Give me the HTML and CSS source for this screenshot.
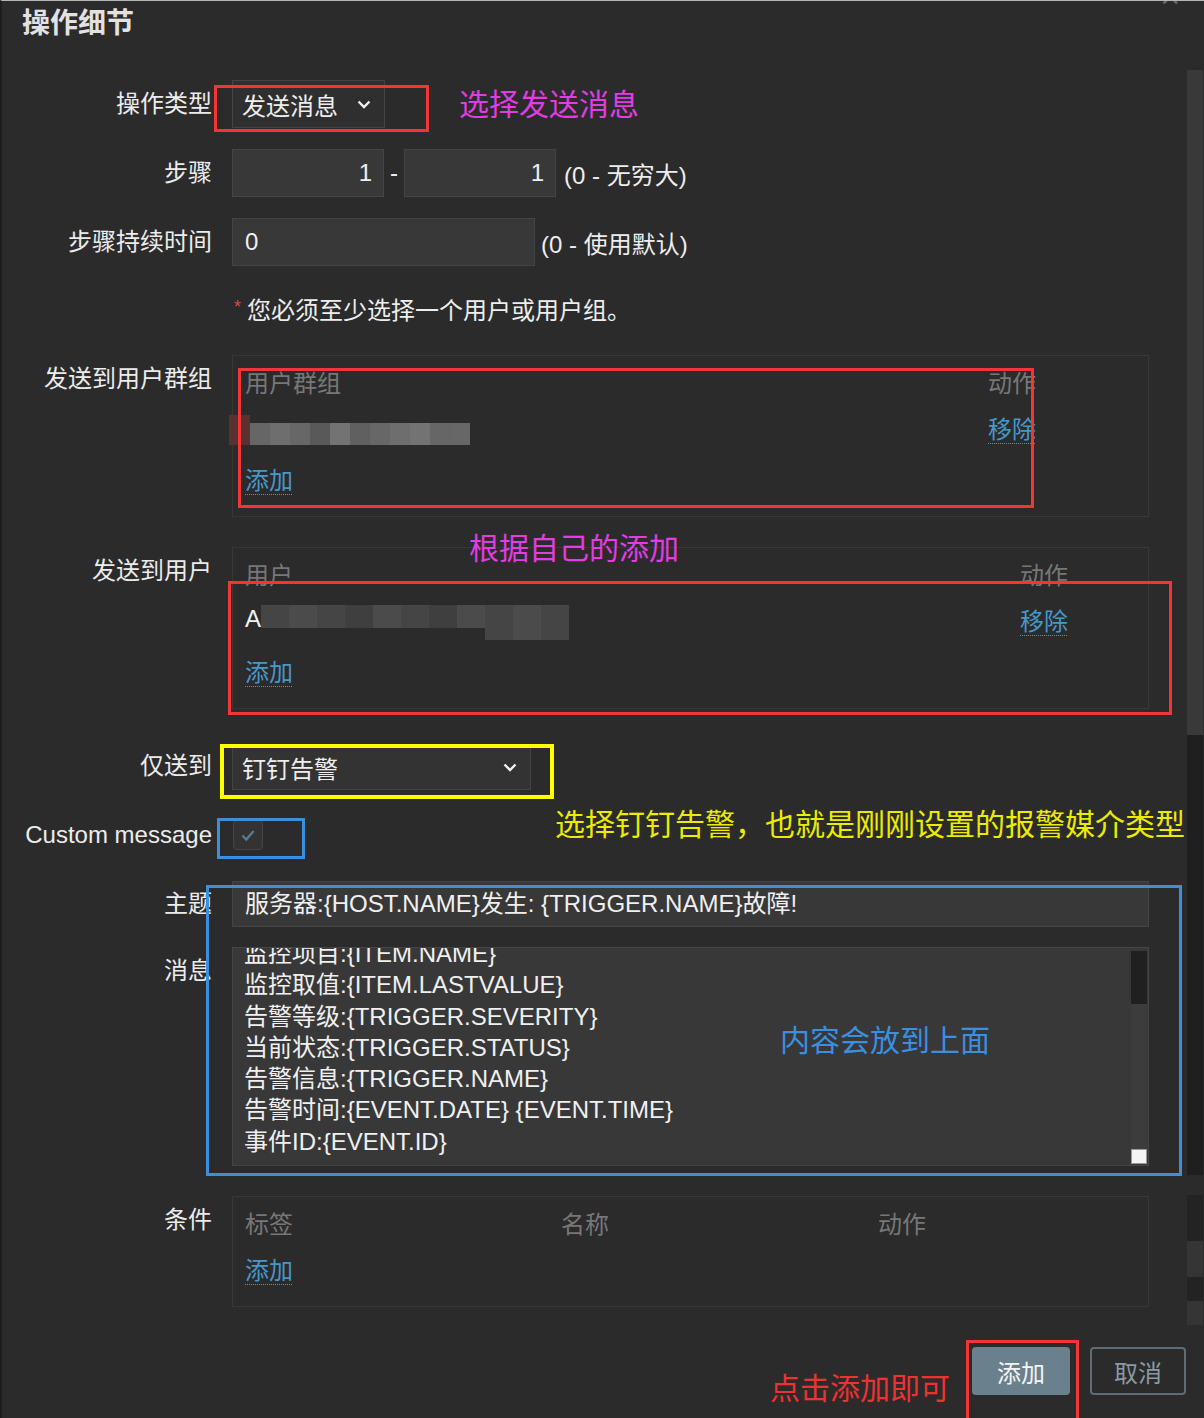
FILE: index.html
```html
<!DOCTYPE html>
<html lang="zh-CN">
<head>
  <meta charset="UTF-8">
  <title>操作细节</title>
  <link rel="stylesheet" href="styles.css">
</head>
<body>
<div class="page">
  <div class="dialog">
    <span class="close">×</span>
    <h2 class="title">操作细节</h2>

    <div class="row first">
      <label class="label">操作类型</label>
      <div class="field">
        <div class="select select-type">
          <span>发送消息</span>
          <svg class="chev" viewBox="0 0 14 9"><path d="M1.5 1.5 L7 7 L12.5 1.5"/></svg>
        </div>
      </div>
    </div>

    <div class="row">
      <label class="label">步骤</label>
      <div class="field inline">
        <div class="input num">1</div>
        <span class="dash">-</span>
        <div class="input num">1</div>
        <span class="hint">(0 - 无穷大)</span>
      </div>
    </div>

    <div class="row">
      <label class="label">步骤持续时间</label>
      <div class="field inline">
        <div class="input wide">0</div>
        <span class="hint hint-near">(0 - 使用默认)</span>
      </div>
    </div>

    <div class="row">
      <span class="label"></span>
      <div class="field note"><span class="req">*</span>您必须至少选择一个用户或用户组。</div>
    </div>

    <div class="row tight">
      <label class="label">发送到用户群组</label>
      <div class="table groups">
        <div class="trow thead"><span>用户群组</span><span>动作</span></div>
        <div class="trow data-row">
          <span class="pixels">
            <i class="px-red"></i><i class="g1"></i><i class="g2"></i><i class="g3"></i><i class="g4"></i><i class="g5"></i><i class="g6"></i><i class="g3"></i><i class="g2"></i><i class="g5"></i><i class="g1"></i><i class="g3"></i>
          </span>
          <a class="link">移除</a>
        </div>
        <div class="trow add-row"><a class="link">添加</a></div>
      </div>
    </div>

    <div class="row gap-lg">
      <label class="label">发送到用户</label>
      <div class="table users">
        <div class="trow thead"><span>用户</span><span>动作</span></div>
        <div class="trow data-row">
          <span class="user-blur">A<span class="pixels-dark"><i></i><i class="d2"></i><i></i><i class="d3"></i><i class="d2"></i><i></i><i class="d3"></i><i class="d2"></i><i class="low"></i><i class="low d2"></i><i class="low"></i></span></span>
          <a class="link">移除</a>
        </div>
        <div class="trow add-row"><a class="link">添加</a></div>
      </div>
    </div>

    <div class="row gap-xl">
      <label class="label label-mid">仅送到</label>
      <div class="field">
        <div class="select select-media">
          <span>钉钉告警</span>
          <svg class="chev" viewBox="0 0 14 9"><path d="M1.5 1.5 L7 7 L12.5 1.5"/></svg>
        </div>
      </div>
    </div>

    <div class="row gap-sm">
      <label class="label">Custom message</label>
      <div class="field inline">
        <span class="checkbox">
          <svg viewBox="0 0 16 16"><path d="M3 8.5 L6.5 12 L13 4.5"/></svg>
        </span>
      </div>
    </div>

    <div class="row">
      <label class="label">主题</label>
      <div class="input subject">服务器:{HOST.NAME}发生: {TRIGGER.NAME}故障!</div>
    </div>

    <div class="row gap-sm">
      <label class="label">消息</label>
      <div class="textarea">
        <div class="lines">
          <div>监控项目:{ITEM.NAME}</div>
          <div>监控取值:{ITEM.LASTVALUE}</div>
          <div>告警等级:{TRIGGER.SEVERITY}</div>
          <div>当前状态:{TRIGGER.STATUS}</div>
          <div>告警信息:{TRIGGER.NAME}</div>
          <div>告警时间:{EVENT.DATE} {EVENT.TIME}</div>
          <div>事件ID:{EVENT.ID}</div>
        </div>
        <div class="ta-scroll">
          <span class="ta-thumb"></span>
          <span class="ta-track"></span>
          <span class="ta-grip"></span>
        </div>
      </div>
    </div>

    <div class="row gap-lg">
      <label class="label">条件</label>
      <div class="table conditions">
        <div class="trow thead"><span>标签</span><span>名称</span><span>动作</span></div>
        <div class="trow"><a class="link">添加</a></div>
      </div>
    </div>

    <div class="footer">
      <button class="btn btn-primary">添加</button>
      <button class="btn btn-cancel">取消</button>
    </div>
  </div>

  <div class="vscroll">
    <span class="vs-thumb"></span>
    <span class="vs-dark"></span>
    <span class="vs-a"></span>
    <span class="vs-b"></span>
    <span class="vs-a vs-short"></span>
    <span class="vs-b vs-short"></span>
  </div>

  <!-- annotations drawn over the screenshot -->
  <div class="mark red m-type"></div>
  <div class="tip magenta t-type">选择发送消息</div>
  <div class="mark red m-groups"></div>
  <div class="tip magenta t-own">根据自己的添加</div>
  <div class="mark red m-users"></div>
  <div class="mark yellow m-media"></div>
  <div class="tip yellow-text t-media">选择钉钉告警，也就是刚刚设置的报警媒介类型</div>
  <div class="mark blue m-check"></div>
  <div class="mark blue m-msg"></div>
  <div class="tip blue-text t-msg">内容会放到上面</div>
  <div class="tip red-text t-add">点击添加即可</div>
  <div class="mark red m-add"></div>
</div>
</body>
</html>
```

FILE: styles.css
```css
body {
  margin: 0;
  background: #2b2b2b;
  font-family: "Liberation Sans", "Noto Sans CJK SC", sans-serif;
  font-size: 24px;
  color: #eeeeee;
}
.page {
  position: relative;
  width: 1204px;
  height: 1418px;
  overflow: hidden;
  display: flex;
  background: #2b2b2b;
  border-top: 1px solid #b5b5b5;
  border-left: 2px solid #1d1d1d;
  box-sizing: border-box;
}
.dialog {
  width: 1184px;
  position: relative;
}
.close {
  position: absolute;
  right: 6px;
  top: -24px;
  font-size: 34px;
  color: #6a6a6a;
}
.title {
  margin: 0;
  padding-left: 20px;
  font-size: 28px;
  line-height: 46px;
  font-weight: bold;
  color: #e2e2e2;
}

/* form rows */
.row {
  display: grid;
  grid-template-columns: 210px 917px;
  column-gap: 20px;
  align-items: start;
  margin-top: 21px;
}
.row.first { margin-top: 33px; }
.row.tight { margin-top: 20px; }
.row.gap-sm { margin-top: 19px; }
.row.gap-lg { margin-top: 30px; }
.row.gap-xl { margin-top: 35px; }
.label {
  text-align: right;
  line-height: 48px;
  height: 48px;
  color: #ececec;
  white-space: nowrap;
}
.label-mid { line-height: 44px; }
.field.inline {
  display: flex;
  align-items: center;
  height: 48px;
}
.input {
  box-sizing: border-box;
  height: 48px;
  line-height: 46px;
  border: 1px solid #454545;
  background: #383838;
  padding: 0 12px;
  color: #f0f0f0;
  white-space: nowrap;
}
.input.num {
  width: 152px;
  text-align: right;
  padding-right: 11px;
}
.input.wide { width: 303px; }
.input.subject { height: 46px; line-height: 44px; margin-top: 1px; }
.dash { margin: 0 6px; }
.hint { margin-left: 8px; }
.hint-near { margin-left: 6px; }
.note {
  height: 48px;
  line-height: 48px;
  padding-left: 2px;
}
.req {
  position: relative;
  top: -6px;
  color: #d84a4a;
  font-size: 18px;
  margin-right: 6px;
}

.select {
  box-sizing: border-box;
  display: flex;
  justify-content: space-between;
  align-items: center;
  height: 48px;
  padding: 0 13px 0 9px;
  border: 1px solid #444;
  background: #2f2f2f;
}
.select-type { width: 153px; }
.select-media { width: 299px; height: 46px; background: #333; }
.chev {
  width: 14px;
  height: 9px;
}
.chev path {
  fill: none;
  stroke: #f2f2f2;
  stroke-width: 2.4;
}

.checkbox {
  box-sizing: border-box;
  width: 30px;
  height: 30px;
  margin-left: 1px;
  border: 1px solid #444;
  border-radius: 4px;
  background: #333;
  display: flex;
  align-items: center;
  justify-content: center;
}
.checkbox svg { width: 18px; height: 18px; }
.checkbox path {
  fill: none;
  stroke: #5a7b96;
  stroke-width: 2;
}

/* tables */
.table {
  box-sizing: border-box;
  border: 1px solid #383838;
  padding: 9px 12px 16px;
  display: flex;
  flex-direction: column;
  gap: 8px;
}
.trow {
  display: grid;
  grid-template-columns: 1fr 48px;
  height: 38px;
  line-height: 38px;
  align-items: center;
}
.groups .trow { padding-right: 100px; }
.users .trow { padding-right: 68px; }
.conditions .trow { grid-template-columns: 316px 317px 1fr; }
.thead { color: #777; }
.data-row + .add-row { margin-top: 5px; }
.link {
  color: #4897c9;
  text-decoration: underline dotted;
  text-underline-offset: 5px;
  text-decoration-thickness: 1px;
  justify-self: start;
  white-space: nowrap;
}

.pixels {
  display: flex;
  align-items: flex-end;
  height: 30px;
  margin-left: -16px;
}
.pixels i {
  display: block;
  width: 20px;
  height: 22px;
}
.pixels .px-red { width: 21px; height: 30px; background: #5a3131; }
.pixels .g1 { background: #666; }
.pixels .g2 { background: #6e6e6e; }
.pixels .g3 { background: #676767; }
.pixels .g4 { background: #595959; }
.pixels .g5 { background: #737373; }
.pixels .g6 { background: #606060; }

.user-blur {
  display: flex;
  align-items: flex-start;
  color: #f2f2f2;
  line-height: 30px;
}
.pixels-dark {
  display: flex;
  align-items: flex-start;
  margin-top: 1px;
}
.pixels-dark i {
  display: block;
  width: 28px;
  height: 23px;
  background: #454545;
}
.pixels-dark .d2 { background: #4b4b4b; }
.pixels-dark .d3 { background: #3f3f3f; }
.pixels-dark .low { height: 35px; }

/* message textarea */
.textarea {
  box-sizing: border-box;
  height: 219px;
  border: 1px solid #454545;
  background: #383838;
  display: flex;
  overflow: hidden;
}
.lines {
  flex: 1;
  padding-left: 11px;
  margin-top: -10px;
  line-height: 31.3px;
  color: #f0f0f0;
}
.ta-scroll {
  width: 16px;
  margin: 3px 1px 1px 0;
  display: flex;
  flex-direction: column;
}
.ta-thumb { height: 53px; background: #202020; }
.ta-track { flex: 1; background: #3c3c3c; }
.ta-grip {
  height: 15px;
  background: #f4f4f4;
  border: 1px solid #999;
  box-sizing: border-box;
}

/* footer buttons */
.footer {
  display: flex;
  justify-content: flex-end;
  gap: 20px;
  margin-top: 40px;
}
.btn {
  box-sizing: border-box;
  height: 48px;
  border-radius: 4px;
  font-family: "Liberation Sans", "Noto Sans CJK SC", sans-serif;
  font-size: 24px;
  cursor: pointer;
}
.btn-primary {
  width: 98px;
  border: none;
  background: #6a808c;
  color: #f4f4f4;
}
.btn-cancel {
  width: 96px;
  border: 2px solid #5d6d77;
  background: transparent;
  color: #8a99a3;
}

/* window scrollbar */
.vscroll {
  width: 16px;
  margin-left: 1px;
  display: flex;
  flex-direction: column;
}
.vs-thumb { height: 665px; margin-top: 69px; background: #393939; }
.vs-dark { height: 440px; background: #1f1f1f; }
.vs-a { height: 46px; margin-top: 20px; background: #232323; }
.vs-b { height: 36px; background: #353535; }
.vs-short { height: 24px; margin-top: 0; }

/* annotations */
.mark {
  position: absolute;
  box-sizing: border-box;
  border: 3px solid;
}
.mark.red { border-color: #f53535; }
.mark.yellow { border-color: #ffff00; border-width: 4px; }
.mark.blue { border-color: #3a8fe0; }
.m-type { left: 212px; top: 84px; width: 215px; height: 47px; }
.m-groups { left: 236px; top: 367px; width: 796px; height: 140px; }
.m-users { left: 226px; top: 580px; width: 944px; height: 134px; }
.m-media { left: 218px; top: 743px; width: 334px; height: 55px; }
.m-check { left: 215px; top: 817px; width: 88px; height: 41px; }
.m-msg { left: 204px; top: 884px; width: 976px; height: 291px; }
.m-add { left: 964px; top: 1339px; width: 113px; height: 100px; }

.tip {
  position: absolute;
  font-family: "Noto Sans CJK SC", sans-serif;
  font-size: 30px;
  line-height: 40px;
  white-space: nowrap;
}
.magenta { color: #e23ce2; }
.yellow-text { color: #ecec00; }
.blue-text { color: #3a8fe0; }
.red-text { color: #ee3232; }
.t-type { left: 457px; top: 81px; }
.t-own { left: 467px; top: 525px; }
.t-media { left: 553px; top: 801px; }
.t-msg { left: 778px; top: 1017px; }
.t-add { left: 768px; top: 1365px; }
```
